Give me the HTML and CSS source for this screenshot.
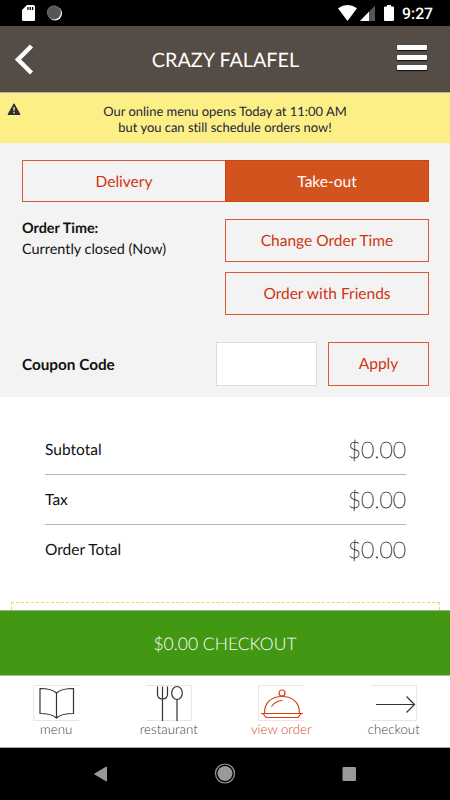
FILE: index.html
```html
<!DOCTYPE html>
<html lang="en">
<head>
  <meta charset="UTF-8">
  <meta name="viewport" content="width=device-width, initial-scale=1.0">
  <title>Crazy Falafel</title>
  <link rel="stylesheet" href="styles.css">
</head>
<body>
  <div class="phone">
    <div class="status">
      <svg width="450" height="26" viewBox="0 0 450 26">
        <path d="M22 10 L27 5 H33.500 Q35 5 35 6.500 V19.500 Q35 21 33.500 21 H23.500 Q22 21 22 19.500 Z" fill="#fff"/>
        <path d="M28 7v3M30.300 7v3M32.600 7v3" stroke="#000" stroke-width="1.300"/>
        <circle cx="55" cy="13.500" r="7" fill="#fff"/>
        <circle cx="54" cy="12.500" r="7" fill="#555"/>
        <circle cx="54" cy="12.500" r="6.500" fill="none" stroke="#888" stroke-width="1" stroke-dasharray="1.200 1"/>
        <path d="M338 8.200 Q347.500 2 357 8.200 L347.500 21 Z" fill="#fff"/>
        <path d="M360 21 L375 5.500 V21 Z" fill="#555"/>
        <path d="M360 21 L369 11.700 V21 Z" fill="#fff"/>
        <path d="M387 5h4v1.500h2q1 0 1 1V20q0 1-1 1h-8q-1 0-1-1V7.500q0-1 1-1h2z" fill="#fff"/>
      </svg>
      <span class="clock">9:27</span>
    </div>

    <header class="header">
      <svg class="back" width="20" height="32" viewBox="0 0 20 32"><path d="M17.500 3 L4 16.500 L17.500 30" fill="none" stroke="#fff" stroke-width="4.500"/></svg>
      <h1>CRAZY FALAFEL</h1>
      <div class="burger"><i></i><i></i><i></i></div>
    </header>

    <div class="notice">
      <svg class="warning" width="14" height="12" viewBox="0 0 14 12"><path d="M7 .8 L13 11.500 H1 Z" fill="#2d2d35" stroke="#2d2d35" stroke-linejoin="round"/><path d="M7 4v3.700M7 8.800v1.600" stroke="#fcef86" stroke-width="1.300"/></svg>
      <p>Our online menu opens Today at 11:00 AM<br>but you can still schedule orders now!</p>
    </div>

    <section class="options">
      <div class="tabs">
        <button class="tab">Delivery</button>
        <button class="tab active">Take-out</button>
      </div>
      <div class="order-time">
        <p><b>Order Time:</b><br>Currently closed (Now)</p>
        <div class="order-buttons">
          <button>Change Order Time</button>
          <button>Order with Friends</button>
        </div>
      </div>
      <div class="coupon">
        <label for="coupon">Coupon Code</label>
        <input type="text" id="coupon">
        <button class="apply">Apply</button>
      </div>
    </section>

    <section class="totals">
      <div class="row"><span>Subtotal</span><span class="price">$0.00</span></div>
      <div class="row"><span>Tax</span><span class="price">$0.00</span></div>
      <div class="row"><span>Order Total</span><span class="price">$0.00</span></div>
      <div class="coupon-box"></div>
    </section>

    <button class="checkout">$0.00 CHECKOUT</button>

    <nav class="nav">
      <a class="item">
        <svg width="46" height="36" viewBox="0 0 46 36">
          <path class="frame" d="M46 .5H.5V35.500H46"/>
          <path d="M23.500 8 C20 4.500 15 3.500 7 3.500 V28.500 C15 28.500 20 29.500 23.500 33 C27 29.500 32 28.500 40.500 28.500 V3.500 C32 3.500 27 4.500 23.500 8 V33"/>
        </svg>
        <span>menu</span>
      </a>
      <a class="item">
        <svg width="46" height="36" viewBox="0 0 46 36">
          <path class="frame" d="M0 .5H45.500V35.500H0"/>
          <path d="M11.500 1.500V9q0 5 5 5t5-5V1.500M16.500 1.500V36M31 14.500V36"/>
          <ellipse cx="31" cy="8" rx="5.300" ry="6.500"/>
        </svg>
        <span>restaurant</span>
      </a>
      <a class="item current">
        <svg width="46" height="36" viewBox="0 0 46 36">
          <path class="frame" d="M46 .5H.5V35.500H46"/>
          <circle cx="24" cy="8" r="3"/>
          <path d="M6.500 28 C6.500 17 14 11.500 24 11.500 S41.500 17 41.500 28M13.500 21.500Q17 16 24.500 15.500M3 28.500H45M5 28.500L8 32.500H40L43 28.500"/>
        </svg>
        <span>view order</span>
      </a>
      <a class="item">
        <svg width="46" height="36" viewBox="0 0 46 36">
          <path class="frame" d="M0 .5H45.500V35.500H0"/>
          <path d="M5 19.500H43.500M35.500 11.500L43.500 19.500L35.500 27.500"/>
        </svg>
        <span>checkout</span>
      </a>
    </nav>

    <div class="system">
      <svg width="450" height="52" viewBox="0 0 450 52" fill="#999">
        <path d="M94.500 26 L106.500 19 V33 Z" stroke="#999" stroke-linejoin="round"/>
        <circle cx="225" cy="25.500" r="7.500"/>
        <circle cx="225" cy="25.500" r="9.500" fill="none" stroke="#999" stroke-width="1.200"/>
        <rect x="342.500" y="19" width="13.500" height="14" rx="1"/>
      </svg>
    </div>
  </div>
</body>
</html>
```
FILE: styles.css
```css
* {
  box-sizing: border-box;
}
body {
  margin: 0;
  background: #fff;
  font-family: Lato, sans-serif;
  font-variant-ligatures: none;
  text-rendering: geometricPrecision;
  color: #111;
}
.phone {
  width: 450px;
  height: 800px;
  display: flex;
  flex-direction: column;
  overflow: hidden;
}
h1, p {
  margin: 0;
}
svg {
  display: block;
}
.status {
  position: relative;
  height: 26px;
  background: #000;
}
.clock {
  position: absolute;
  left: 402px;
  top: 4px;
  color: #fff;
  font: 500 15.8px/19px Roboto, sans-serif;
}
.header {
  height: 67px;
  background: #544c45;
  border-bottom: 1px solid #b9b5ae;
  display: flex;
  align-items: center;
  justify-content: space-between;
  padding: 0 23px 0 14px;
}
.header h1 {
  font-size: 19.8px;
  font-weight: 400;
  color: #fff;
  padding-left: 20px;
  padding-top: 2px;
}
.burger {
  display: flex;
  flex-direction: column;
  gap: 5px;
  padding-bottom: 4px;
}
.burger i {
  width: 30px;
  height: 5px;
  background: #fff;
  border-radius: 1px;
  box-shadow: 0 1px 1px #111;
}
.notice {
  position: relative;
  height: 50px;
  background: #fcef86;
  padding-top: 10px;
  text-align: center;
  font-size: 12.95px;
  line-height: 16px;
  color: #24243a;
}
.warning {
  position: absolute;
  left: 7px;
  top: 10px;
}
.options {
  height: 254px;
  background: #f3f3f3;
  padding: 17px 21px 0 22px;
}
button {
  font-family: inherit;
  font-variant-ligatures: none;
  text-rendering: inherit;
  font-size: 15.5px;
  height: 43px;
  padding: 0;
  border: 1px solid #db5a38;
  background: transparent;
  color: #cf3512;
}
.tabs {
  display: flex;
}
.tab {
  width: 203px;
  height: 42px;
  padding: 1px 0 0;
  border-right: 0;
}
.tab.active {
  width: 204px;
  background: #d2531d;
  color: #fff;
  border: 1px solid #d2410f;
}
.order-time {
  display: flex;
  justify-content: space-between;
  margin-top: 17px;
}
.order-time p {
  font-size: 14.4px;
  line-height: 21px;
  margin-top: -1px;
}
.order-buttons {
  display: flex;
  flex-direction: column;
  gap: 10px;
  width: 204px;
}
.coupon {
  display: flex;
  align-items: center;
  margin-top: 27px;
}
.coupon label {
  font-size: 15.3px;
  font-weight: 700;
  width: 194px;
  padding-top: 1px;
}
.coupon input {
  width: 101px;
  height: 44px;
  border: 1px solid #dcdcdc;
  background: #fff;
}
.apply {
  width: 101px;
  height: 44px;
  margin-left: 11px;
}
.totals {
  flex: 1;
  padding: 28px 11px 0;
  display: flex;
  flex-direction: column;
}
.row {
  display: flex;
  justify-content: space-between;
  align-items: center;
  height: 50px;
  margin: 0 33px 0 34px;
  border-bottom: 1px solid #b5b5b5;
  font-size: 15.5px;
}
.row:nth-child(3) {
  border-bottom: 0;
}
.price {
  font-size: 22.8px;
  font-weight: 200;
  padding-bottom: 2px;
  -webkit-text-stroke: 0.35px #111;
}
.coupon-box {
  margin-top: 27px;
  width: 429px;
  height: 8px;
  border: 1px dashed #fbd34f;
  border-bottom: 0;
}
.checkout {
  height: 66px;
  border: 0;
  border-top: 1px solid #9ab886;
  border-bottom: 1px solid #a9b8a0;
  background: #429713;
  color: #fff;
  font-size: 17.5px;
  font-weight: 300;
}
.nav {
  height: 72px;
  display: flex;
  border-bottom: 1px solid #aaa;
}
.item {
  flex: 1;
  display: flex;
  flex-direction: column;
  align-items: center;
  padding-top: 9px;
  font-size: 13.3px;
  font-weight: 300;
  line-height: 17px;
  color: #444;
}
.item svg {
  fill: none;
  stroke: #333;
  stroke-width: 1.2;
}
.item .frame {
  stroke: #e6e6e6;
  stroke-width: 1;
}
.item.current {
  color: #d2502c;
}
.current svg {
  stroke: #d2410f;
}
.current .frame {
  stroke: #f8e2dc;
}
.system {
  height: 52px;
  background: #000;
}
```
